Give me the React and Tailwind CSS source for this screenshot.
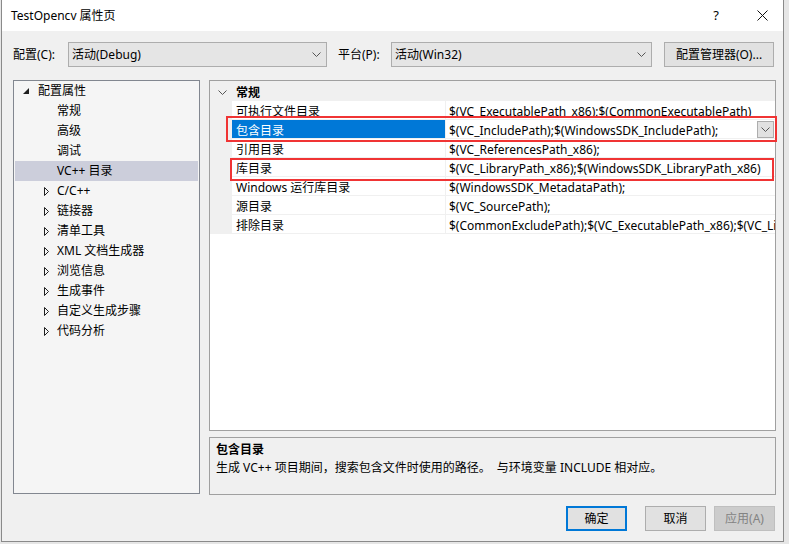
import React from "react";

const font = { fontFamily: '"Noto Sans", "Noto Sans CJK SC", sans-serif' };

const treeChildren = [
    { label: "常规" },
    { label: "高级" },
    { label: "调试" },
    { label: "VC++ 目录", selected: true },
    { label: "C/C++", arrow: true },
    { label: "链接器", arrow: true },
    { label: "清单工具", arrow: true },
    { label: "XML 文档生成器", arrow: true },
    { label: "浏览信息", arrow: true },
    { label: "生成事件", arrow: true },
    { label: "自定义生成步骤", arrow: true },
    { label: "代码分析", arrow: true },
];

const rows = [
    { name: "可执行文件目录", value: "$(VC_ExecutablePath_x86);$(CommonExecutablePath)" },
    { name: "包含目录", value: "$(VC_IncludePath);$(WindowsSDK_IncludePath);", active: true },
    { name: "引用目录", value: "$(VC_ReferencesPath_x86);" },
    { name: "库目录", value: "$(VC_LibraryPath_x86);$(WindowsSDK_LibraryPath_x86)" },
    { name: "Windows 运行库目录", value: "$(WindowsSDK_MetadataPath);" },
    { name: "源目录", value: "$(VC_SourcePath);" },
    { name: "排除目录", value: "$(CommonExcludePath);$(VC_ExecutablePath_x86);$(VC_LibraryPath_x86)" },
];

function Chevron({ className = "" }) {
    return (
        <svg width="9" height="5" viewBox="0 0 9 5" className={className}>
            <polyline points="0.5,0.5 4.5,4.5 8.5,0.5" fill="none" stroke="#555" strokeWidth="1" />
        </svg>
    );
}

function Select({ value, width }) {
    return (
        <div className={`${width} h-[25px] flex items-center justify-between bg-[#e5e5e5] border border-[#adadad] pl-[3px] pr-[5px]`}>
            <span className="text-[12px] leading-none text-black">{value}</span>
            <Chevron />
        </div>
    );
}

function Button({ children, primary, disabled }) {
    return (
        <div
            className={`w-[61px] h-[25px] flex items-center justify-center text-[12px] leading-none
            ${primary ? "border-2 border-[#0078d7] bg-[#e1e1e1] text-black" : ""}
            ${disabled ? "border border-[#bfbfbf] bg-[#cccccc] text-[#838383]" : ""}
            ${!primary && !disabled ? "border border-[#adadad] bg-[#e1e1e1] text-black" : ""}`}
        >
            {children}
        </div>
    );
}

export default function App() {
    return (
        <div className="relative w-[789px] h-[544px] overflow-hidden bg-[#e6e6e6]" style={font}>
            <div className="ml-px w-[783px] h-[542px] border border-t-0 border-[#8a8a8a] bg-[#f0f0f0] flex flex-col">

                {/* title bar */}
                <div className="h-[31px] bg-white flex items-center pl-[9px] text-[12px] text-black">
                    <span className="leading-none">TestOpencv 属性页</span>
                    <span className="ml-auto text-[13px] leading-none">?</span>
                    <svg width="11" height="11" viewBox="0 0 11 11" className="ml-[38px] mr-[15px]">
                        <path d="M0.5 0.5 L10.5 10.5 M10.5 0.5 L0.5 10.5" stroke="#111" strokeWidth="1" />
                    </svg>
                </div>

                {/* configuration row */}
                <div className="mt-[11px] h-[25px] flex items-center pl-[11px] text-[12px] text-black">
                    <span className="w-[55px] leading-none">配置(C):</span>
                    <Select value="活动(Debug)" width="w-[259px]" />
                    <span className="ml-[11px] w-[53px] leading-none">平台(P):</span>
                    <Select value="活动(Win32)" width="w-[261px]" />
                    <div className="ml-[12px] w-[110px] h-[25px] flex items-center justify-center bg-[#e1e1e1] border border-[#adadad] leading-none">
                        配置管理器(O)...
                    </div>
                </div>

                {/* panels */}
                <div className="mt-[13px] flex pl-[11px] gap-[9px]">
                    {/* tree */}
                    <div className="w-[187px] h-[414px] border border-[#828790] bg-[#f5f5f5] px-px text-[12px] text-black">
                        <div className="h-[20px] flex items-center">
                            <svg width="6" height="6" viewBox="0 0 6 6" className="ml-[8px]">
                                <polygon points="6,0 6,6 0,6" fill="#1e1e1e" />
                            </svg>
                            <span className="ml-[9px] leading-none">配置属性</span>
                        </div>
                        {treeChildren.map((item) => (
                            <div
                                key={item.label}
                                className={`h-[20px] flex items-center ${item.selected ? "bg-[#cccedb]" : ""}`}
                            >
                                <div className="w-[42px] flex justify-end pr-[8px]">
                                    {item.arrow && (
                                        <svg width="5" height="9" viewBox="0 0 5 9">
                                            <polygon points="0.5,0.5 4.5,4.5 0.5,8.5" fill="none" stroke="#1e1e1e" strokeWidth="1" />
                                        </svg>
                                    )}
                                </div>
                                <span className="leading-none">{item.label}</span>
                            </div>
                        ))}
                    </div>

                    {/* property grid + description */}
                    <div className="w-[567px] flex flex-col gap-[6px]">
                        <div className="h-[351px] border border-[#a0a0a0] bg-white text-[12px] text-black overflow-hidden">
                            <div className="h-[20px] bg-[#f0f0f0] flex items-center pt-[3px]">
                                <Chevron className="ml-[8px]" />
                                <span className="ml-[9px] font-bold leading-none">常规</span>
                            </div>
                            {rows.map((row) => (
                                <div key={row.name} className="h-[19px] flex">
                                    <div className="w-[22px] bg-[#f0f0f0]" />
                                    <div
                                        className={`w-[214px] flex items-center pl-[4px] pt-[3px] border-b border-r border-[#f0f0f0]
                                        ${row.active ? "bg-[#0078d7] text-white" : ""}`}
                                    >
                                        <span className="leading-none whitespace-nowrap">{row.name}</span>
                                    </div>
                                    <div className="flex-1 min-w-0 flex items-center pl-[3px] border-b border-[#f0f0f0] overflow-hidden">
                                        <span className="leading-none whitespace-nowrap pt-[3px]">{row.value}</span>
                                        {row.active && (
                                            <div className="ml-auto mr-px w-[17px] h-[17px] flex items-center justify-center bg-[#e1e1e1] border border-[#adadad]">
                                                <Chevron />
                                            </div>
                                        )}
                                    </div>
                                </div>
                            ))}
                        </div>

                        <div className="h-[58px] border border-[#a0a0a0] bg-[#f0f0f0] px-[6px] pt-[3px] text-[12px] text-black">
                            <div className="font-bold leading-[18px]">包含目录</div>
                            <div className="leading-[18px]">
                                生成 VC++ 项目期间，搜索包含文件时使用的路径。&nbsp;&nbsp;与环境变量 INCLUDE 相对应。
                            </div>
                        </div>
                    </div>
                </div>

                {/* dialog buttons */}
                <div className="mt-[11px] flex justify-end pr-[8px]">
                    <Button primary>确定</Button>
                    <div className="w-[18px]" />
                    <Button>取消</Button>
                    <div className="w-[8px]" />
                    <Button disabled>应用(A)</Button>
                </div>
            </div>

            {/* red highlight frames drawn over the grid */}
            <div className="absolute left-[226px] top-[116px] w-[551px] h-[26px] border-2 border-[#f03434]" />
            <div className="absolute left-[230px] top-[158px] w-[544px] h-[23px] border-2 border-[#f03434]" />
        </div>
    );
}
